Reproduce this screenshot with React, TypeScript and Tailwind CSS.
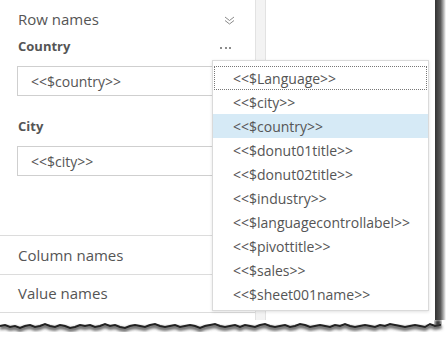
import React from "react";

const items = [
  "<<$Language>>",
  "<<$city>>",
  "<<$country>>",
  "<<$donut01title>>",
  "<<$donut02title>>",
  "<<$industry>>",
  "<<$languagecontrollabel>>",
  "<<$pivottitle>>",
  "<<$sales>>",
  "<<$sheet001name>>",
];

function TornEdge() {
  const pts: string[] = [];
  const ys = [6,5,7,6,8,6,5,7,6,4,6,7,5,6,8,7,5,6,5,7,6,4,6,5,7,8,6,5,6,7,5,4,6,7,6,5,7,6,5,6,8,6,5,4,6,7,6,5,7,5,6,7,5,4,6,7,6,5,7,6,4,5,7,6,5,6,7,5,6,4,6,7,6,5,6,7,5,6,4,5,6,7,6,5,6,7,4,6,5,7];
  for (let i = 0; i < ys.length; i++) {
    const x = i * 5;
    if (x > 440) break;
    pts.push(`${x},${ys[i]}`);
  }
  pts.push("440,4");
  const line = pts.join(" ");
  return (
    <svg width="446" height="20" viewBox="0 0 446 20" className="block">
      <defs>
        <filter id="blur" x="-5%" y="-50%" width="110%" height="200%">
          <feGaussianBlur stdDeviation="1.6" />
        </filter>
      </defs>
      <polygon points={`0,0 ${line} 446,0 446,0`} fill="#ffffff" />
      <polyline points={line} fill="none" stroke="#555" strokeWidth="3.5" filter="url(#blur)" transform="translate(0,2)" />
      <polyline points={line} fill="none" stroke="#222" strokeWidth="2" />
      <rect x="435" y="0" width="6" height="6" fill="#333" filter="url(#blur)" />
    </svg>
  );
}

export default function App() {
  return (
    <div
      className="w-[446px] h-[340px] bg-white overflow-hidden flex flex-col"
      style={{ fontFamily: '"Open Sans", "Noto Sans", sans-serif' }}
    >
      <div className="flex h-[320px]">
        <div className="relative w-[435px] flex">
          {/* left panel */}
          <div className="w-[256px] border-r border-[#e2e2e2] flex flex-col text-[#555]">
            <div className="h-[236px] border-b border-[#dcdcdc] flex flex-col">
              <div className="flex items-center justify-between pl-[18px] pr-[20px] pt-[8px] h-[29px]">
                <span className="text-[15px] leading-[20px]">Row names</span>
                <svg width="11" height="9" viewBox="0 0 11 9" fill="none" stroke="#8a8a8a" strokeWidth="1" className="mt-[4px]">
                  <path d="M1 1 L5.5 4.5 L10 1" />
                  <path d="M1 4.5 L5.5 8 L10 4.5" />
                </svg>
              </div>
              <div className="flex items-center justify-between pl-[18px] pr-[24px] mt-[8px] h-[18px]">
                <span className="text-[13px] font-bold leading-[18px]">Country</span>
                <span className="flex gap-[2.5px] pt-[4px]">
                  <span className="w-[2px] h-[2px] bg-[#666] rounded-full" />
                  <span className="w-[2px] h-[2px] bg-[#666] rounded-full" />
                  <span className="w-[2px] h-[2px] bg-[#666] rounded-full" />
                </span>
              </div>
              <div className="ml-[17px] mr-[14px] mt-[11px] h-[30px] border border-[#cfcfcf] flex items-center pl-[13px] text-[14px]">
                &lt;&lt;$country&gt;&gt;
              </div>
              <div className="pl-[18px] mt-[21px] h-[18px] flex items-center">
                <span className="text-[13px] font-bold leading-[18px]">City</span>
              </div>
              <div className="ml-[17px] mr-[14px] mt-[11px] h-[30px] border border-[#cfcfcf] flex items-center pl-[13px] text-[14px]">
                &lt;&lt;$city&gt;&gt;
              </div>
            </div>
            <div className="h-[39px] border-b border-[#dcdcdc] flex items-center pl-[18px] text-[15px]">
              Column names
            </div>
            <div className="h-[38px] border-b border-[#dcdcdc] flex items-center pl-[18px] text-[15px]">
              Value names
            </div>
          </div>
          {/* gutter */}
          <div className="w-[10px] bg-[#f3f3f3] border-r border-[#e2e2e2]" />
          <div className="flex-1 bg-white" />

          {/* dropdown */}
          <div className="absolute left-[212px] top-[60px] w-[217px] h-[251px] bg-white border border-[#dadada] shadow-[0_1px_3px_rgba(0,0,0,0.12)] pt-[5px] text-[14px] text-[#555]">
            {items.map((it, i) => (
              <div
                key={it}
                className={
                  i === 0
                    ? "h-[24px] flex items-center mx-[1px] border border-dotted border-[#777] pl-[18px]"
                    : i === 2
                    ? "h-[24px] flex items-center pl-[20px] bg-[#d6eaf6]"
                    : "h-[24px] flex items-center pl-[20px]"
                }
              >
                {it}
              </div>
            ))}
          </div>
        </div>
        <div className="w-[11px] bg-gradient-to-r from-[#333] via-[#5a5a5a] to-white" />
      </div>
      <TornEdge />
    </div>
  );
}
